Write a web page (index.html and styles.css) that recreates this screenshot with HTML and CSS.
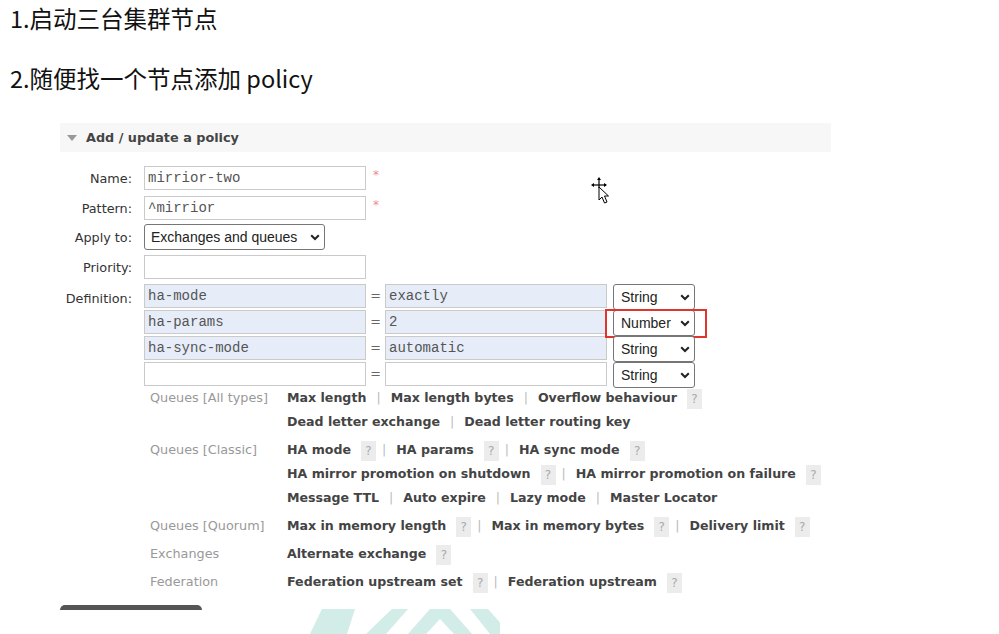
FILE: index.html
```html
<!DOCTYPE html>
<html lang="zh-CN">
<head>
<meta charset="utf-8">
<title>Add / update a policy</title>
<link rel="stylesheet" href="styles.css">
</head>
<body>
<p class="step">1.启动三台集群节点</p>
<p class="step step2">2.随便找一个节点添加 policy</p>

<section class="panel">
  <h2 class="panel-head"><span class="tri"></span>Add / update a policy</h2>
  <div class="form">
    <div class="row">
      <label class="lbl">Name:</label>
      <input class="txt" value="mirrior-two"><span class="req">*</span>
    </div>
    <div class="row row-pattern">
      <label class="lbl">Pattern:</label>
      <input class="txt" value="^mirrior"><span class="req">*</span>
    </div>
    <div class="row row-apply">
      <label class="lbl">Apply to:</label>
      <span class="sel sel-apply">
        <select><option>Exchanges and queues</option></select>
        <svg class="chev" width="10" height="7" viewBox="0 0 10 7"><path d="M1.2 1.2L5 5 8.8 1.2" fill="none" stroke="#222" stroke-width="2"/></svg>
      </span>
    </div>
    <div class="row row-priority">
      <label class="lbl">Priority:</label>
      <input class="txt" value="">
    </div>
    <div class="row row-def">
      <label class="lbl lbl-def">Definition:</label>
      <div class="defs">
        <input class="txt filled" value="ha-mode"><span class="eq">=</span><input class="txt filled" value="exactly">
        <span class="sel sel-type"><select><option>String</option></select><svg class="chev" width="10" height="7" viewBox="0 0 10 7"><path d="M1.2 1.2L5 5 8.8 1.2" fill="none" stroke="#222" stroke-width="2"/></svg></span>

        <input class="txt filled" value="ha-params"><span class="eq">=</span><input class="txt filled" value="2">
        <span class="sel sel-type mark"><select><option>Number</option></select><svg class="chev" width="10" height="7" viewBox="0 0 10 7"><path d="M1.2 1.2L5 5 8.8 1.2" fill="none" stroke="#222" stroke-width="2"/></svg></span>

        <input class="txt filled" value="ha-sync-mode"><span class="eq">=</span><input class="txt filled" value="automatic">
        <span class="sel sel-type"><select><option>String</option></select><svg class="chev" width="10" height="7" viewBox="0 0 10 7"><path d="M1.2 1.2L5 5 8.8 1.2" fill="none" stroke="#222" stroke-width="2"/></svg></span>

        <input class="txt" value=""><span class="eq">=</span><input class="txt" value="">
        <span class="sel sel-type"><select><option>String</option></select><svg class="chev" width="10" height="7" viewBox="0 0 10 7"><path d="M1.2 1.2L5 5 8.8 1.2" fill="none" stroke="#222" stroke-width="2"/></svg></span>
      </div>
    </div>

    <div class="help">
      <div class="hl">Queues [All types]</div>
      <div class="links">
        <div><span>Max length</span><span class="sep">|</span><span>Max length bytes</span><span class="sep">|</span><span>Overflow behaviour</span><span class="q">?</span></div>
        <div><span>Dead letter exchange</span><span class="sep">|</span><span>Dead letter routing key</span></div>
      </div>

      <div class="hl">Queues [Classic]</div>
      <div class="links">
        <div><span>HA mode</span><span class="q">?</span><span class="sep">|</span><span>HA params</span><span class="q">?</span><span class="sep">|</span><span>HA sync mode</span><span class="q">?</span></div>
        <div><span>HA mirror promotion on shutdown</span><span class="q">?</span><span class="sep">|</span><span>HA mirror promotion on failure</span><span class="q">?</span></div>
        <div><span>Message TTL</span><span class="sep">|</span><span>Auto expire</span><span class="sep">|</span><span>Lazy mode</span><span class="sep">|</span><span>Master Locator</span></div>
      </div>

      <div class="hl">Queues [Quorum]</div>
      <div class="links">
        <div><span>Max in memory length</span><span class="q">?</span><span class="sep">|</span><span>Max in memory bytes</span><span class="q">?</span><span class="sep">|</span><span>Delivery limit</span><span class="q">?</span></div>
      </div>

      <div class="hl">Exchanges</div>
      <div class="links">
        <div><span>Alternate exchange</span><span class="q">?</span></div>
      </div>

      <div class="hl">Federation</div>
      <div class="links">
        <div><span>Federation upstream set</span><span class="q">?</span><span class="sep">|</span><span>Federation upstream</span><span class="q">?</span></div>
      </div>
    </div>

    <div class="btnbar"></div>
  </div>
</section>

<svg class="watermark" width="200" height="28" viewBox="0 0 200 28">
  <polygon points="22,3 55,3 47,28 10,28" fill="#d2ece8"/>
  <polygon points="92,3 108,3 86,28 66,28" fill="#d2ece8"/>
  <polygon points="130,3 150,3 172,28 154,28 140,13 126,28 108,28" fill="#d2ece8"/>
  <polygon points="170,3 188,3 203,20 203,28 190,28" fill="#d2ece8"/>
</svg>

<svg class="cursor" width="22" height="30" viewBox="0 0 22 30">
  <g stroke="#000" stroke-width="1.2" fill="none">
    <line x1="9" y1="3" x2="9" y2="12"/>
    <line x1="3" y1="9" x2="16" y2="9"/>
  </g>
  <polygon points="9,1 11,4 7,4" fill="#000"/>
  <polygon points="1,9 4,7 4,11" fill="#000"/>
  <polygon points="17,9 14,7 14,11" fill="#000"/>
  <polygon points="9,11 9,24 12,21 14.5,27 17,26 14.5,20 18.5,20" fill="#fff" stroke="#000" stroke-width="1"/>
</svg>
</body>
</html>
```
FILE: styles.css
```css
* {
  box-sizing: border-box;
}

html, body {
  margin: 0;
  padding: 0;
  background: #fff;
}

body {
  position: relative;
  width: 999px;
  height: 634px;
  overflow: hidden;
  font-family: "DejaVu Sans", Verdana, sans-serif;
  color: #444;
}

.step {
  margin: 0;
  padding-left: 10px;
  font-family: "Noto Sans CJK SC", sans-serif;
  font-size: 23.5px;
  line-height: 37px;
  color: #111;
}

.step2 {
  margin-top: 23px;
}

.panel {
  margin: 26px 0 0 60px;
  width: 771px;
}

.panel-head {
  margin: 0;
  height: 29px;
  background: #f7f7f7;
  display: flex;
  align-items: center;
  padding-left: 7px;
  font-size: 12.8px;
  font-weight: bold;
  color: #444;
}

.tri {
  width: 0;
  height: 0;
  border-left: 5.5px solid transparent;
  border-right: 5.5px solid transparent;
  border-top: 6px solid #999;
  margin-right: 9px;
}

.form {
  padding-top: 14px;
}

.row {
  display: flex;
  align-items: center;
}

.row-pattern { margin-top: 6px; }
.row-apply { margin-top: 4px; }
.row-priority { margin-top: 5px; }
.row-def { margin-top: 5px; align-items: flex-start; }

.lbl {
  width: 72px;
  margin-right: 12px;
  text-align: right;
  font-size: 12.8px;
  color: #333;
  white-space: nowrap;
}

.lbl-def {
  line-height: 26px;
  padding-top: 2px;
}

.txt {
  width: 222px;
  height: 24px;
  margin: 0;
  border: 1px solid #cacaca;
  padding: 0 3px;
  font-family: "Liberation Mono", "Courier New", monospace;
  font-size: 14px;
  color: #555;
  background: #fff;
  outline: none;
  border-radius: 0;
}

.txt.filled {
  background: #e6edf9;
}

.req {
  align-self: flex-start;
  margin: 3px 0 0 7px;
  font-size: 12px;
  line-height: 12px;
  color: #f08a8a;
}

.sel {
  position: relative;
  display: inline-block;
}

.sel select {
  appearance: none;
  -webkit-appearance: none;
  display: block;
  height: 26px;
  margin: 0;
  border: 1px solid #767676;
  border-radius: 3px;
  background: #fff;
  font-family: "Liberation Sans", Arial, sans-serif;
  font-size: 14px;
  color: #222;
  padding: 0 0 0 6px;
  outline: none;
}

.sel .chev {
  position: absolute;
  right: 5px;
  top: 10px;
  pointer-events: none;
}

.sel-apply select {
  width: 181px;
}

.defs {
  display: grid;
  grid-template-columns: 222px 19px 222px 88px;
  grid-auto-rows: 26px;
}

.eq {
  text-align: center;
  font-size: 12.8px;
  line-height: 24px;
  color: #666;
}

.sel-type {
  margin-left: 6px;
  width: 82px;
}

.sel-type select {
  width: 82px;
  padding-left: 7px;
}

.sel.mark::after {
  content: "";
  position: absolute;
  left: -8px;
  top: -1px;
  right: -12px;
  bottom: -2px;
  border: 2px solid #e0342c;
  pointer-events: none;
}

.help {
  display: grid;
  grid-template-columns: 137px auto;
  row-gap: 4px;
  margin: -2px 0 0 90px;
  font-size: 12.8px;
  line-height: 24px;
}

.hl {
  color: #999;
  white-space: nowrap;
}

.links {
  font-weight: bold;
  font-size: 12.6px;
  color: #444;
  white-space: nowrap;
}

.sep {
  font-weight: normal;
  color: #bbb;
  margin: 0 10px;
}

.q {
  display: inline-block;
  width: 15px;
  height: 20px;
  line-height: 20px;
  margin-left: 10px;
  background: #ececec;
  color: #aaa;
  font-weight: normal;
  font-size: 12px;
  text-align: center;
  vertical-align: middle;
}

.q + .sep {
  margin-left: 6px;
}

.btnbar {
  margin-top: 11px;
  width: 142px;
  height: 5px;
  background: #555;
  border-radius: 5px 5px 0 0;
}

.watermark {
  position: absolute;
  left: 300px;
  top: 606px;
}

.cursor {
  position: absolute;
  left: 590px;
  top: 176px;
}
```
